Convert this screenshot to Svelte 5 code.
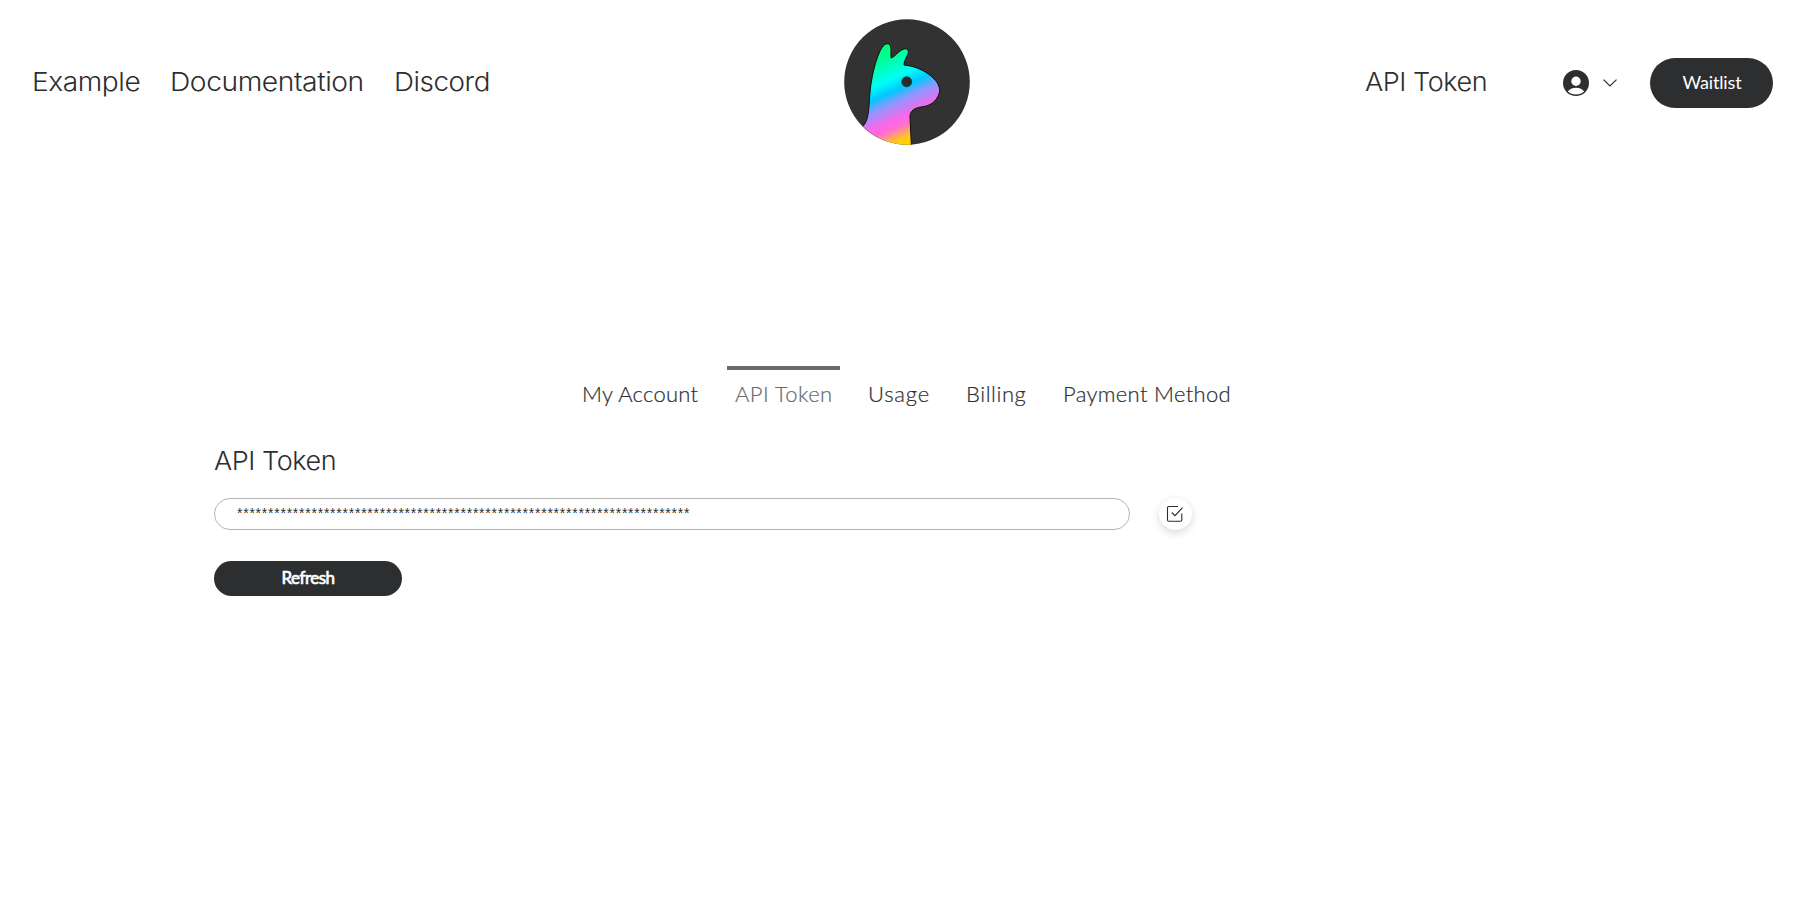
<script>
  const links = [
    { label: 'Example', width: 138, stretch: 1.08 },
    { label: 'Documentation', width: 224, stretch: 1.085 },
    { label: 'Discord', width: 120, stretch: 1.067 },
  ];
  const tabs = [
    { label: 'My Account', width: 153, spacing: 0.26 },
    { label: 'API Token', width: 134, spacing: 0.42, active: true },
    { label: 'Usage', width: 98, spacing: 0.8 },
    { label: 'Billing', width: 97, spacing: 0.55 },
    { label: 'Payment Method', width: 180, spacing: 0.32 },
  ];
  const token = '*'.repeat(73);
</script>

<header>
  <nav class="links">
    {#each links as l}
      <a style="width:{l.width}px"><span style="transform:scaleX({l.stretch})">{l.label}</span></a>
    {/each}
  </nav>
  <svg class="logo" width="126" height="126" viewBox="0 0 126 126">
    <defs>
      <linearGradient id="rainbow" gradientUnits="userSpaceOnUse" x1="32" y1="29.5" x2="73" y2="120.5">
        <stop offset="0" stop-color="#00ff83" />
        <stop offset=".12" stop-color="#00ff92" />
        <stop offset=".34" stop-color="#00fff6" />
        <stop offset=".46" stop-color="#00c8ff" />
        <stop offset=".57" stop-color="#8f96ff" />
        <stop offset=".74" stop-color="#ff65e8" />
        <stop offset=".81" stop-color="#ff70cf" />
        <stop offset=".92" stop-color="#ffc129" />
        <stop offset=".98" stop-color="#ffd500" />
      </linearGradient>
      <clipPath id="disc"><circle cx="63" cy="63" r="62.7" /></clipPath>
    </defs>
    <circle cx="63" cy="63" r="62.8" fill="#323232" />
    <path clip-path="url(#disc)" d="M17 109C23 104 24 98 25 87C26 66 29 48 36 32C39 26 42 24 45 25C48 27 46.500 35 47 39C51 38 54 32 60 30C64 29 65 32 64 35C62 39 60 42 60 46C71 47 81 52 87 57C94 63 97 69 95 75C92 83 86 87 77 88C70 89 66 92 66 98L67.5 130H10Z" fill="url(#rainbow)" stroke="#101010" stroke-width="1" />
    <circle cx="62.7" cy="62.8" r="5" fill="#282c2c" stroke="#123f49" stroke-width=".8" />
  </svg>
  <div class="right">
    <a class="api"><span>API Token</span></a>
    <svg class="user" width="26" height="26" viewBox="0 0 26 26">
      <circle cx="13" cy="13" r="13" fill="#2d2e30" />
      <circle cx="13" cy="11.3" r="4.7" fill="#fff" />
      <path d="M4.8 21.3C7 18.6 10 17.7 13 17.7S19 18.6 21.2 21.3A11.8 11.8 0 0 1 4.8 21.3Z" fill="#fff" />
    </svg>
    <svg class="chevron" width="14" height="8" viewBox="0 0 14 8"><path d="M.5 .6L7 7L13.5 .6" fill="none" stroke="#2d2e30" stroke-width="1.2" /></svg>
    <button class="waitlist"><span>Waitlist</span></button>
  </div>
</header>

<nav class="tabs">
  {#each tabs as t}
    <a class:active={t.active} style="width:{t.width}px;letter-spacing:{t.spacing}px"><span>{t.label}</span></a>
  {/each}
</nav>

<main>
  <h1><span>API Token</span></h1>
  <div class="row">
    <div class="field">{token}</div>
    <button class="check" aria-label="Copy">
      <svg width="18" height="18" viewBox="0 0 18 18" fill="none" stroke="#2d2e30" stroke-width="1.1">
        <path d="M12 1.5H2.7Q1.5 1.5 1.5 2.7V15Q1.5 16.2 2.7 16.2H14.5Q15.8 16.2 15.8 15V8.5" />
        <path d="M5.8 7.5L9 10.7L16.6 2.6" />
      </svg>
    </button>
  </div>
  <button class="refresh"><span>Refresh</span></button>
</main>

<style>
  :global(body) { margin: 0; background: #fff; }
  header, .tabs, main { color: #2d2e30; }
  header { display: flex; align-items: flex-start; height: 366px; box-sizing: border-box; padding: 19px 0 0 32px; }
  .links { display: flex; width: 812px; padding-top: 46px; }
  .links a, .api, h1 { font: 300 26px/34px Inter, sans-serif; white-space: nowrap; flex: none; letter-spacing: -.4px; }
  .links span, .api span, h1 span { display: inline-block; transform-origin: 0 50%; }
  .api span, h1 span { transform: scaleX(1.038); }
  .logo { flex: none; }
  .right { display: flex; align-items: center; height: 50px; margin-top: 39px; margin-left: 395px; }
  .api { width: 198px; padding-bottom: 2px; }
  .chevron { margin: 0 33px 0 14px; }
  button { border: 0; padding: 0; color: #fff; background: #2d2e30; display: flex; align-items: center; justify-content: center; }
  .waitlist { width: 123px; height: 50px; border-radius: 25px; font: 400 18px/24px Lato, sans-serif; letter-spacing: -.15px; padding: 0 0 3px 1px; }
  .tabs { display: flex; padding-left: 574px; }
  .tabs a { flex: none; box-sizing: border-box; padding: 13px 0 0 7px; height: 62px; font: 300 22px/30px Lato, sans-serif; white-space: nowrap; -webkit-text-stroke: .2px currentColor; }
  .tabs a:first-child, .tabs .active { padding-left: 8px; }
  .tabs .active { color: #6b6b6d; background: linear-gradient(#6b6b6d, #6b6b6d) 0 0 / 113px 4px no-repeat; }
  main { padding-left: 214px; }
  h1 { margin: 0 0 16px; padding-top: 16px; height: 54px; box-sizing: border-box; }
  .row { display: flex; gap: 29px; height: 32px; margin-bottom: 31px; }
  .field { width: 916px; height: 32px; box-sizing: border-box; border: 1px solid #b5b5b6; border-radius: 16px; padding: 0 0 0 22px; font: 14px/28px "Liberation Sans", sans-serif; letter-spacing: .76px; }
  .check { width: 33px; height: 32px; border-radius: 50%; background: #fff; box-shadow: 0 3px 8px rgba(30, 30, 70, .16); padding-right: 2px; box-sizing: border-box; }
  .refresh { width: 188px; height: 35px; border-radius: 17.5px; font: 400 17px/24px Lato, sans-serif; letter-spacing: -.5px; -webkit-text-stroke: .7px #fff; padding-bottom: 2px; }
</style>
